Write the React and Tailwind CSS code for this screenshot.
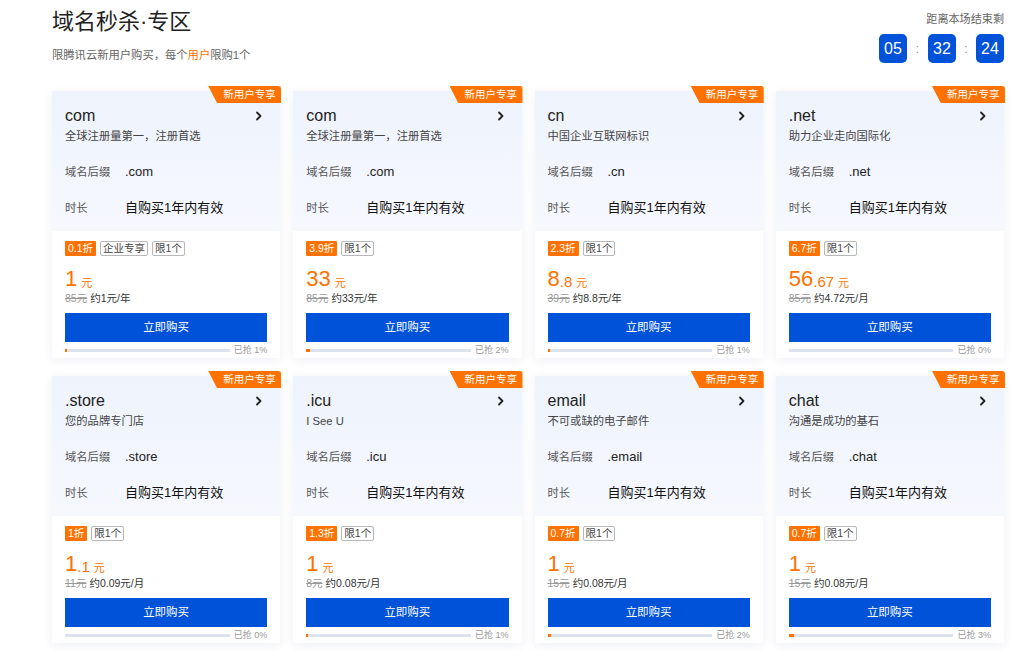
import React from "react";

const items = [
  { name: "com", desc: "全球注册量第一，注册首选", suffix: ".com", off: "0.1折", tags: ["企业专享", "限1个"], int: "1", dec: "", orig: "85元", per: "约1元/年", pct: 1 },
  { name: "com", desc: "全球注册量第一，注册首选", suffix: ".com", off: "3.9折", tags: ["限1个"], int: "33", dec: "", orig: "85元", per: "约33元/年", pct: 2 },
  { name: "cn", desc: "中国企业互联网标识", suffix: ".cn", off: "2.3折", tags: ["限1个"], int: "8", dec: ".8", orig: "39元", per: "约8.8元/年", pct: 1 },
  { name: ".net", desc: "助力企业走向国际化", suffix: ".net", off: "6.7折", tags: ["限1个"], int: "56", dec: ".67", orig: "85元", per: "约4.72元/月", pct: 0 },
  { name: ".store", desc: "您的品牌专门店", suffix: ".store", off: "1折", tags: ["限1个"], int: "1", dec: ".1", orig: "11元", per: "约0.09元/月", pct: 0 },
  { name: ".icu", desc: "I See U", suffix: ".icu", off: "1.3折", tags: ["限1个"], int: "1", dec: "", orig: "8元", per: "约0.08元/月", pct: 1 },
  { name: "email", desc: "不可或缺的电子邮件", suffix: ".email", off: "0.7折", tags: ["限1个"], int: "1", dec: "", orig: "15元", per: "约0.08元/月", pct: 2 },
  { name: "chat", desc: "沟通是成功的基石", suffix: ".chat", off: "0.7折", tags: ["限1个"], int: "1", dec: "", orig: "15元", per: "约0.08元/月", pct: 3 },
];

function Chevron() {
  return (
    <svg width="8" height="10" viewBox="0 0 8 10" className="mr-[4px]">
      <path d="M2 1.5 L5.5 5 L2 8.5" fill="none" stroke="#222" strokeWidth="1.8" strokeLinecap="round" strokeLinejoin="round" />
    </svg>
  );
}

function Card({ it }) {
  const fill = it.pct > 0 ? Math.max(2, it.pct * 1.7) : 0;
  return (
    <div className="relative bg-white h-[267px] flex flex-col shadow-[0_2px_10px_rgba(0,40,120,0.07)]">
      <div className="absolute top-[-5px] right-[-1px] w-[73px] h-[17px] bg-[#ff7200] text-white text-[10.5px] leading-[17px] pl-[15px] rounded-tr-[3px] [clip-path:polygon(0_0,100%_0,100%_100%,12%_100%)]">
        新用户专享
      </div>
      <div className="h-[140px] bg-gradient-to-b from-[#eef3fc] to-[#f6f8fe] pl-[13px] pr-[13px] pt-[15px]">
        <div className="flex items-center justify-between h-[20px]">
          <span className="text-[16px] leading-[20px] text-[#222]">{it.name}</span>
          <Chevron />
        </div>
        <div className="mt-[2px] text-[11.3px] leading-[16px] text-[#444]">{it.desc}</div>
        <div className="mt-[20px] flex items-center h-[16px]">
          <span className="w-[60px] text-[11.3px] text-[#555]">域名后缀</span>
          <span className="text-[13px] text-[#222]">{it.suffix}</span>
        </div>
        <div className="mt-[20px] flex items-center h-[16px]">
          <span className="w-[60px] text-[11.3px] text-[#555]">时长</span>
          <span className="text-[13px] text-[#111]">自购买1年内有效</span>
        </div>
      </div>
      <div className="px-[13px] pt-[10px] flex flex-col">
        <div className="flex items-center gap-[4px] h-[15px]">
          <span className="h-[15px] px-[3px] bg-[#ff7200] text-white text-[10.5px] leading-[15px] rounded-[1px]">{it.off}</span>
          {it.tags.map((t) => (
            <span key={t} className="h-[15px] px-[2px] border border-[#b8b8b8] text-[#444] text-[10.5px] leading-[13px] rounded-[2px]">{t}</span>
          ))}
        </div>
        <div className="mt-[8px] h-[26px] flex items-end text-[#ff7200] leading-none">
          <span className="text-[22px]">{it.int}</span>
          {it.dec && <span className="text-[15px] mb-[1px]">{it.dec}</span>}
          <span className="text-[11px] ml-[4px] mb-[1px]">元</span>
        </div>
        <div className="mt-[1px] h-[14px] flex items-center text-[10.5px] leading-[14px]">
          <span className="line-through text-[#999]">{it.orig}</span>
          <span className="ml-[3px] text-[#333]">{it.per}</span>
        </div>
        <div className="mt-[8px] h-[29px] bg-[#0052d9] text-white text-[11.5px] flex items-center justify-center">立即购买</div>
        <div className="mt-[2px] flex items-center h-[12px]">
          <div className="flex-1 h-[3px] bg-[#dde3ee] relative">
            <div className="absolute left-0 top-0 h-[3px] bg-[#ff7200]" style={{ width: fill + "px" }} />
          </div>
          <span className="ml-[4px] text-[9px] text-[#999] leading-none">已抢 {it.pct}%</span>
        </div>
      </div>
    </div>
  );
}

export default function App() {
  return (
    <div className="w-[1024px] h-[668px] bg-white overflow-hidden font-['Liberation_Sans','Noto_Sans_CJK_SC',sans-serif]">
      <div className="ml-[52px] w-[952px]">
        <div className="flex justify-between">
          <div className="pt-[8px]">
            <div className="text-[22px] leading-[28px] text-[#222]">域名秒杀·专区</div>
            <div className="mt-[11px] text-[11.3px] leading-[16px] text-[#666]">
              限腾讯云新用户购买，每个<span className="text-[#ff7200]">用户</span>限购1个
            </div>
          </div>
          <div className="flex flex-col items-end pt-[11px]">
            <div className="text-[11.1px] leading-[16px] text-[#666]">距离本场结束剩</div>
            <div className="mt-[7px] flex items-center">
              <div className="w-[28px] h-[29px] rounded-[5px] bg-[#0052d9] text-white text-[16px] flex items-center justify-center">05</div>
              <span className="w-[21px] text-center text-[12px] text-[#999]">:</span>
              <div className="w-[28px] h-[29px] rounded-[5px] bg-[#0052d9] text-white text-[16px] flex items-center justify-center">32</div>
              <span className="w-[20px] text-center text-[12px] text-[#999]">:</span>
              <div className="w-[28px] h-[29px] rounded-[5px] bg-[#0052d9] text-white text-[16px] flex items-center justify-center">24</div>
            </div>
          </div>
        </div>
        <div className="mt-[28px] grid grid-cols-4 gap-x-[13px] gap-y-[18px]">
          {items.map((it, i) => (
            <Card key={i} it={it} />
          ))}
        </div>
      </div>
    </div>
  );
}
